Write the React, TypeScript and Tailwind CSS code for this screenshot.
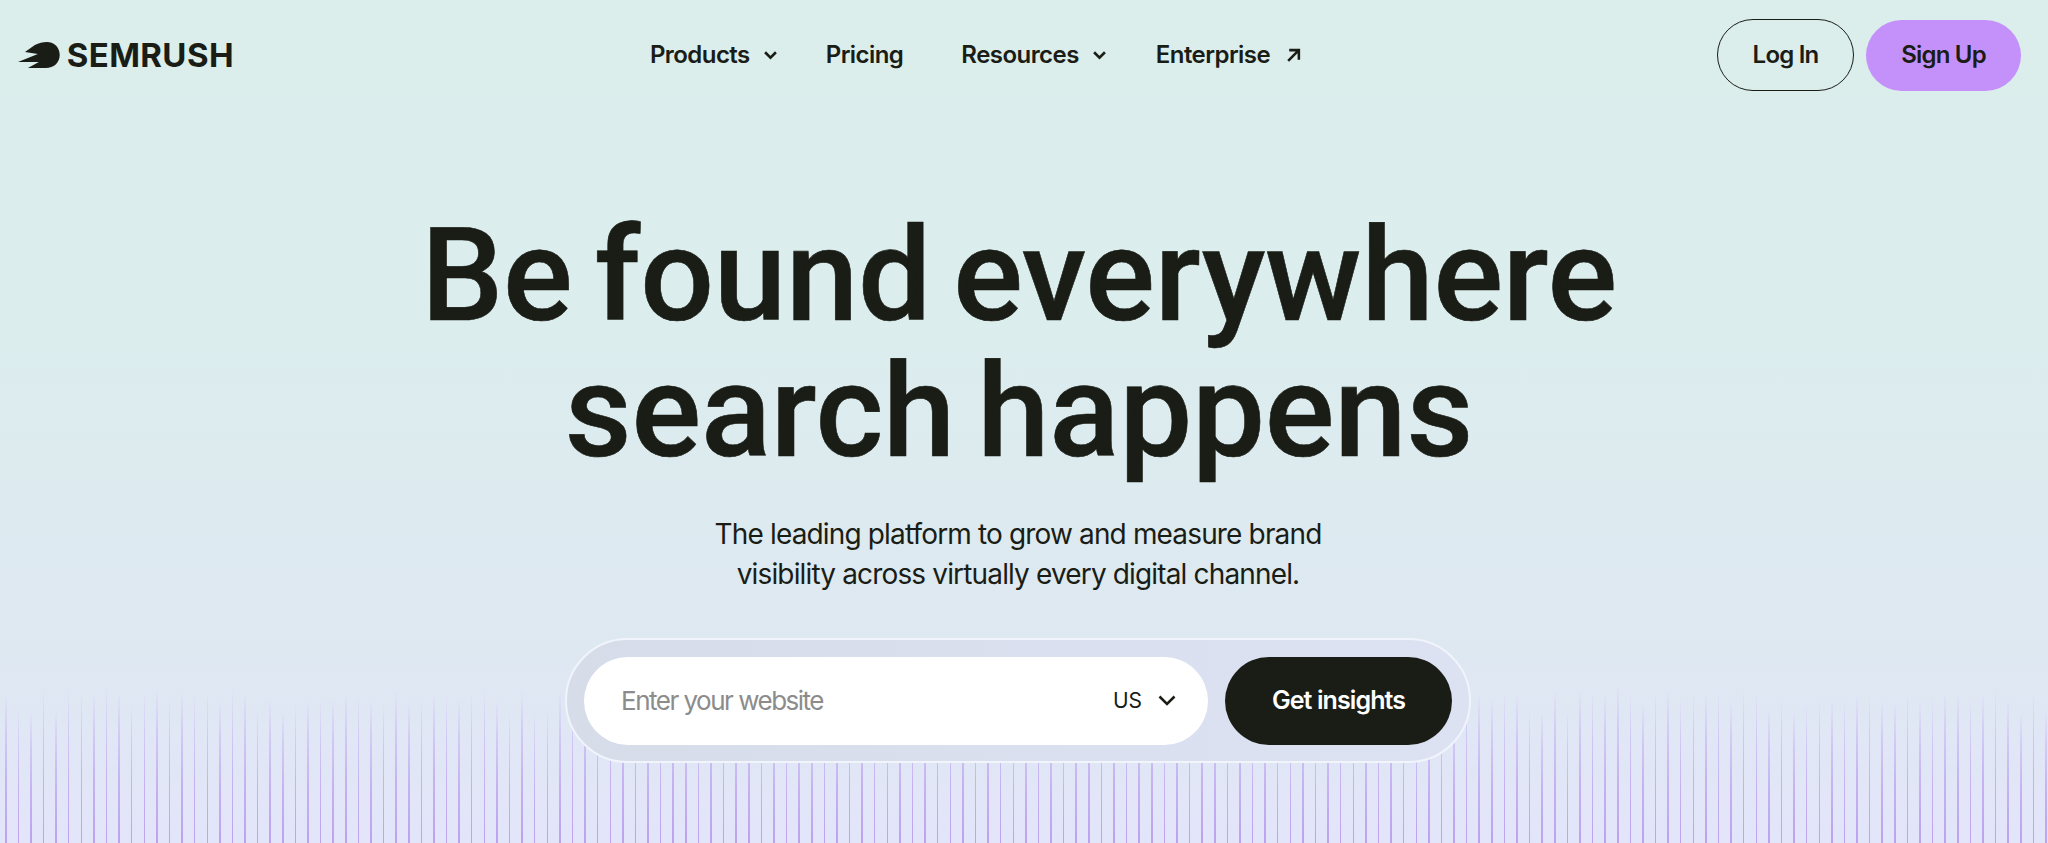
import React from "react";

const H = [
  150, 142, 150, 150, 142, 150, 150, 144, 132, 150, 142, 154, 132, 142, 154, 142, 132, 150, 142, 150, 136, 150, 142, 150,
];

function seq(n: number) {
  const out: number[] = [];
  for (let i = 0; i < n; i++) {
    out.push(H[(i * 7 + (i % 5)) % H.length] + ((i * 13) % 5) - 2);
  }
  return out;
}

const bars = seq(163);

function Chevron({ className, sw = 2.4 }: { className: string; sw?: number }) {
  return (
    <svg viewBox="0 0 12 8" fill="none" stroke="currentColor" strokeWidth={sw} className={className}>
      <path d="M1 1 6 6 11 1" />
    </svg>
  );
}

export default function App() {
  return (
    <div className="relative h-[843px] w-full overflow-hidden bg-[linear-gradient(180deg,#dbeeeb_0%,#dcedee_40%,#dee8f1_77%,#e3e5fa_100%)] font-['Inter',sans-serif] text-[#1a1d16]">
      <div className="absolute bottom-0 left-[5px] flex h-[160px] items-end">
        {bars.map((h, i) => (
          <div key={i} className="flex h-full w-[12.6px] shrink-0 items-end">
            <div
              className="w-[1.5px] bg-[linear-gradient(0deg,#bda3ee_0%,#c5b2f0_40%,#d2ccf4_75%,#e1e5f6_100%)]"
              style={{ height: h }}
            />
          </div>
        ))}
      </div>

      <div className="relative flex h-[843px] flex-col">
        <header className="flex h-[110px] shrink-0 items-center justify-between pl-[18px] pr-[27px]">
          <div className="flex w-[216px] items-center gap-[7px]">
            <svg viewBox="0 0 42 26" className="h-[26px] w-[42px]" fill="currentColor">
              <path d="M29 0C37 0 42 6 42 13C42 21 36 26 28 26L10 26L21 20L0 20L20 12L7 10L17 3C21 1 25 0 29 0Z" />
            </svg>
            <span className="text-[33px] font-bold leading-none tracking-[0.4px]">SEMRUSH</span>
          </div>
          <nav className="flex items-center text-[24px] font-semibold tracking-[-0.55px]">
            <a className="flex items-center gap-[14px]">Products<Chevron className="h-[9px] w-[13px]" /></a>
            <a className="ml-[49px]">Pricing</a>
            <a className="ml-[58px] flex items-center gap-[14px]">Resources<Chevron className="h-[9px] w-[13px]" /></a>
            <a className="ml-[50px] flex items-center gap-[16px]">
              Enterprise
              <svg viewBox="0 0 14 14" fill="none" stroke="currentColor" strokeWidth="2.4" className="h-[15px] w-[15px]">
                <path d="M2 12 12 2M3 2H12v9" />
              </svg>
            </a>
          </nav>
          <div className="flex items-center gap-[12px] text-[24px] font-semibold tracking-[-0.8px]">
            <button className="h-[72px] w-[137px] rounded-full border border-[#1a1d16]">Log In</button>
            <button className="h-[71px] w-[155px] rounded-full bg-[#c491fb]">Sign Up</button>
          </div>
        </header>

        <main className="flex flex-col items-center pr-[12px]">
          <h1 className="mt-[98px] pl-[2px] text-center font-['Roboto',sans-serif] text-[130px] font-medium leading-[136px] tracking-[-0.2px] [word-spacing:-10px] [-webkit-text-stroke:0.6px_#1a1d16]">
            Be found everywhere
            <br />
            search happens
          </h1>
          <p className="mt-[34px] text-center text-[28px] leading-[40px] tracking-[-0.85px]">
            The leading platform to grow and measure brand
            <br />
            visibility across virtually every digital channel.
          </p>
          <form className="mt-[44px] flex h-[125px] w-[906px] items-center gap-[17px] rounded-full border-2 border-[#f1f4fb] bg-[linear-gradient(90deg,#d6dde9,#dde2f3)] px-[17px]">
            <div className="flex h-[88px] w-[624px] items-center rounded-full bg-white pl-[37px] pr-[32px]">
              <input
                placeholder="Enter your website"
                className="min-w-0 flex-1 bg-transparent text-[26px] tracking-[-1.5px] outline-none placeholder:text-[#8c8c8c]"
              />
              <span className="text-[21px]">US</span>
              <Chevron className="ml-[16px] h-[12px] w-[18px]" sw={1.7} />
            </div>
            <button type="button" className="h-[88px] w-[227px] rounded-full bg-[#1a1d16] text-[25px] font-semibold tracking-[-0.9px] text-white">
              Get insights
            </button>
          </form>
        </main>
      </div>
    </div>
  );
}
